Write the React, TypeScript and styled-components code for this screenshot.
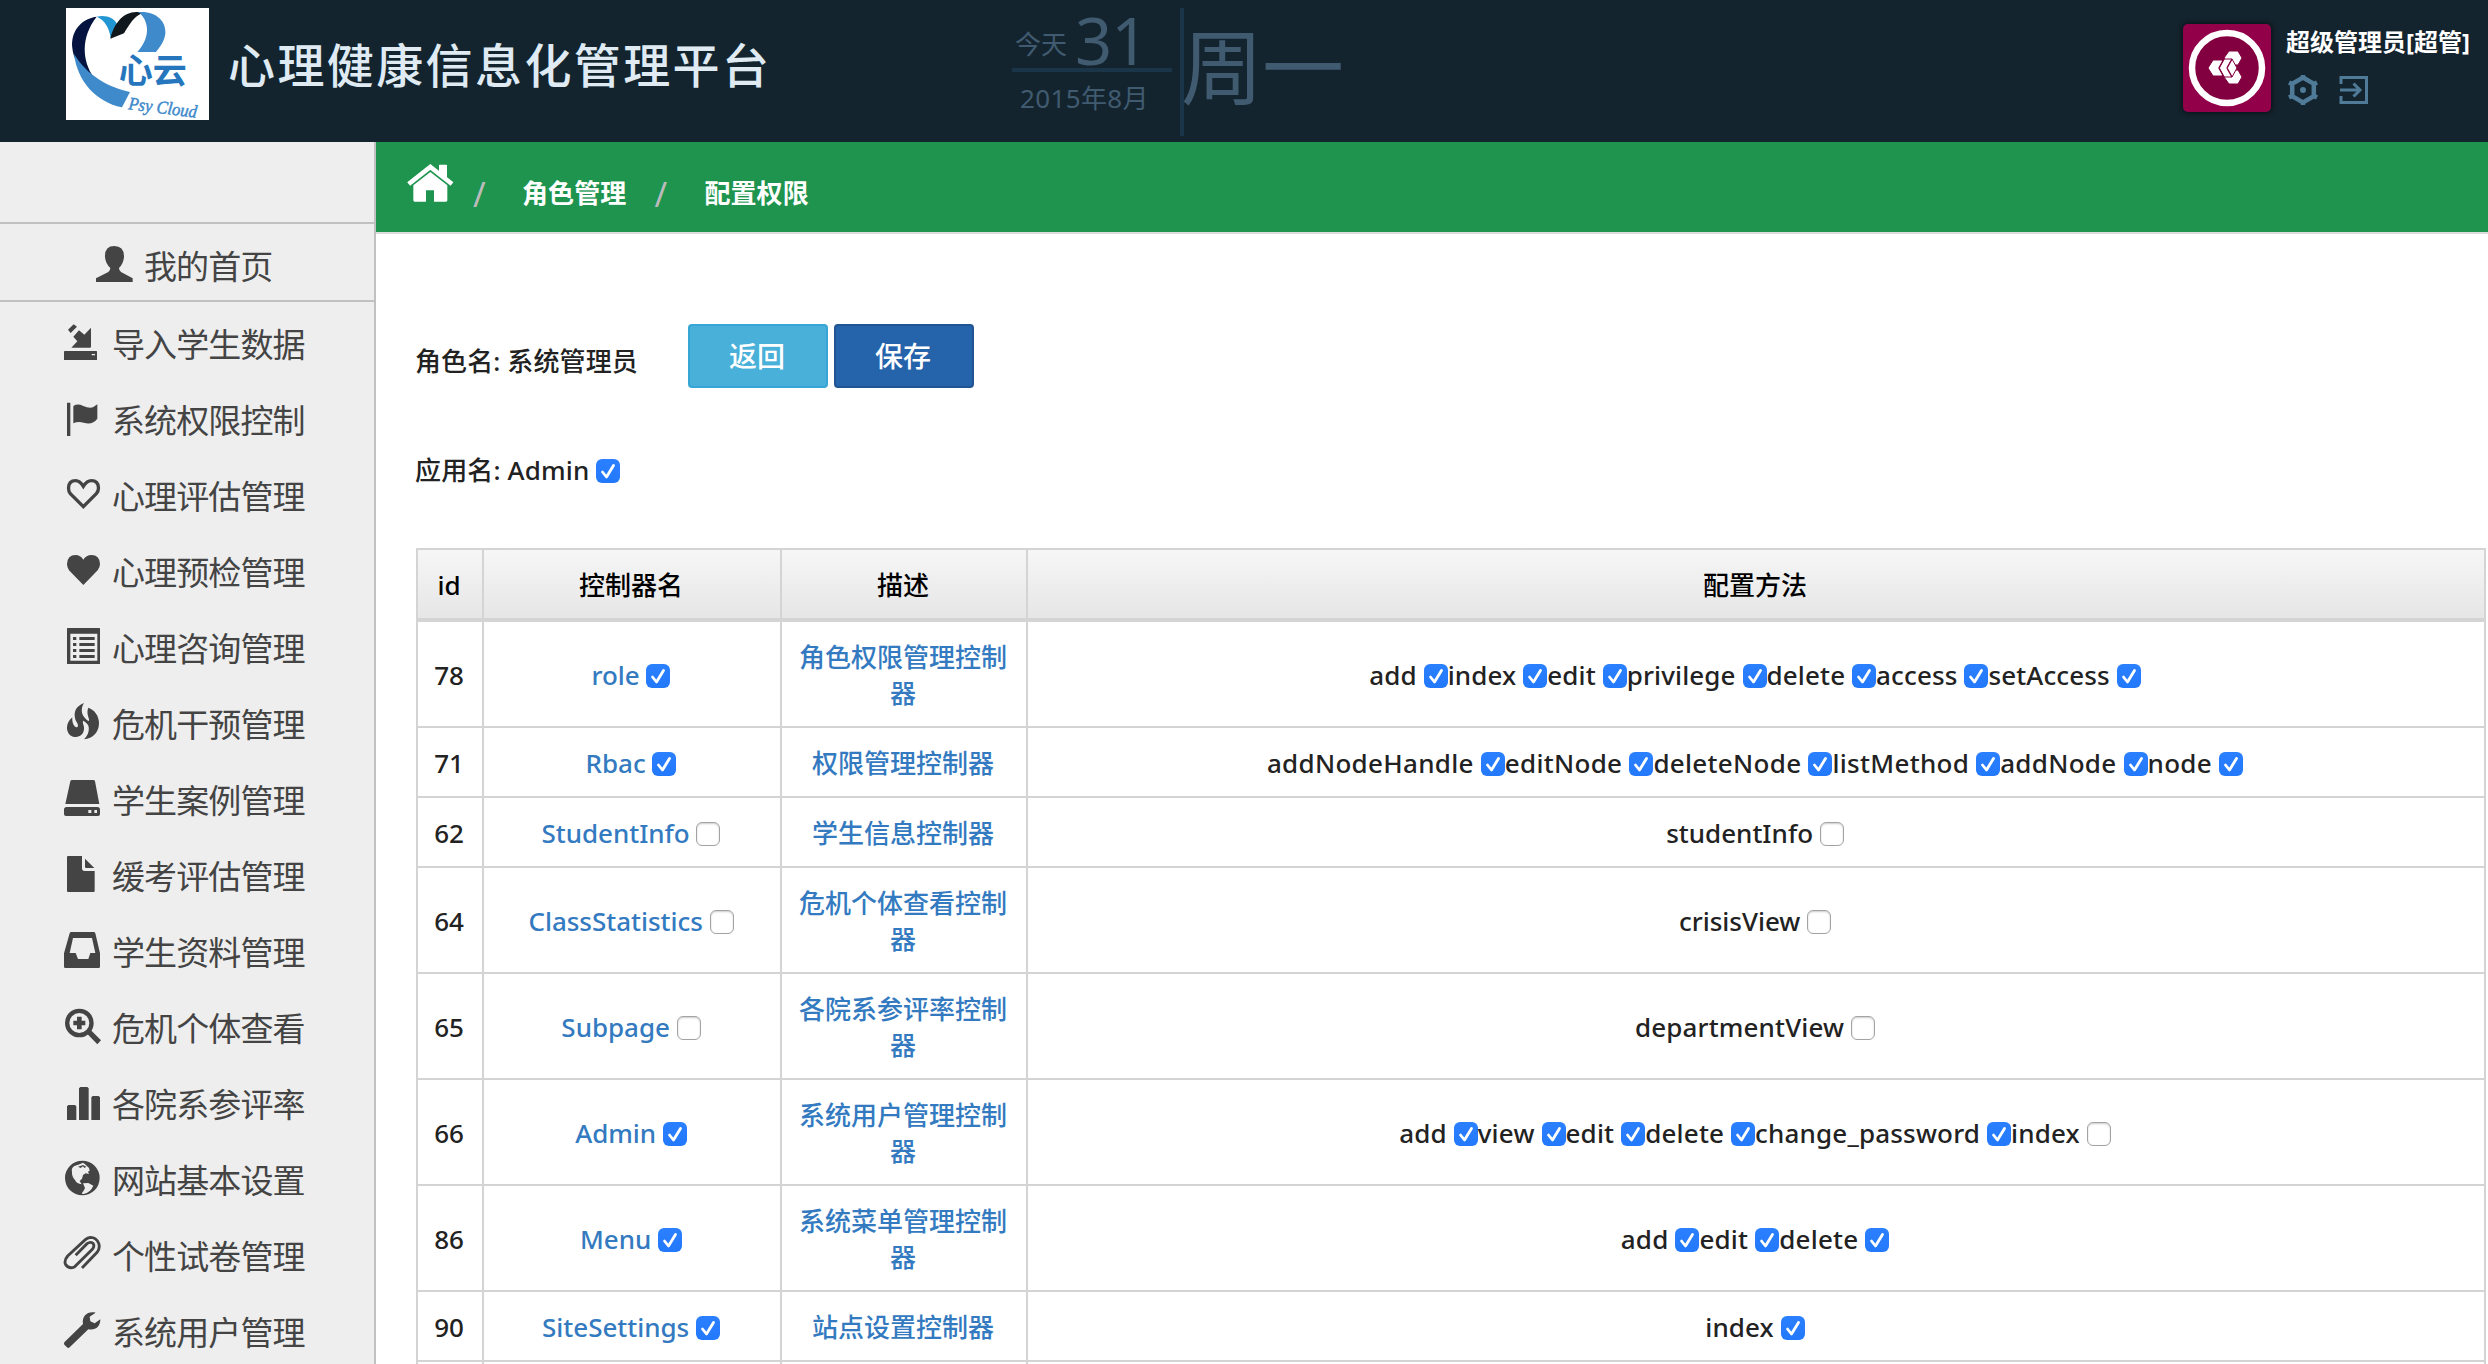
import React from 'react';
import styled, { createGlobalStyle } from 'styled-components';

const Global = createGlobalStyle`
  * { box-sizing: border-box; }
  body { margin: 0; background: #fff; overflow: hidden; font-family: 'Noto Sans', 'Noto Sans CJK SC', sans-serif; }
`;

const Page = styled.div`
  width: 2488px; height: 1364px; overflow: hidden;
  display: grid; grid-template-rows: 142px 1fr;
`;
const Header = styled.header`
  display: flex; align-items: flex-start; background: #14242e; padding-left: 66px;
`;
const Logo = styled.svg`
  width: 143px; height: 112px; margin-top: 8px; flex: none; background: #fff;
`;
const Title = styled.h1`
  margin: 30px 0 0 19px; width: 784px; flex: none; white-space: nowrap;
  font: 500 47px/66px 'Noto Sans CJK SC', sans-serif; letter-spacing: 2.4px; color: #dfeaf3;
`;
const DateBox = styled.div`
  width: 172px; height: 128px; margin-top: 8px; flex: none; color: #405b70; border-right: 4px solid #1b3548;
  display: flex; flex-direction: column;
`;
const Today = styled.div`
  width: 160px; height: 64px; border-bottom: 4px solid #1b3548; padding-left: 3px;
  display: flex; align-items: flex-start; font-size: 26px; line-height: 72px; white-space: nowrap;
`;
const Day = styled.span`
  font-size: 65px; line-height: 64px; letter-spacing: -1px; margin-left: 8px;
`;
const Month = styled.div`
  padding-left: 8px; font-size: 26px; line-height: 52px; letter-spacing: 0.35px;
`;
const Weekday = styled.div`
  font-size: 82px; line-height: 133px; color: #405b70; margin-left: -3px; width: 1002px; flex: none; letter-spacing: -1px;
`;
const Avatar = styled.svg`
  width: 88px; height: 88px; margin-top: 24px; flex: none; border-radius: 5px; box-shadow: 0 0 4px 2px #0a161d;
`;
const UserBox = styled.div`
  margin: 24px 0 0 15px; display: flex; flex-direction: column; gap: 13px;
`;
const UserName = styled.div`
  font-size: 24px; line-height: 36px; font-weight: 700; color: #fff; white-space: nowrap;
`;
const UserTools = styled.div`
  display: flex; gap: 18px; height: 34px;
  svg { width: 34px; height: 34px; fill: none; stroke: #4f7b98; stroke-width: 3; }
`;
const Body = styled.div`
  display: grid; grid-template-columns: 376px 1fr; min-height: 0;
`;
const Sidebar = styled.nav`
  background: #eee; border-right: 2px solid #c1c1c1; padding-top: 80px; color: #444; overflow: hidden;
`;
const NavItem = styled.a<{ $home?: boolean }>`
  display: flex; height: ${p => (p.$home ? 80 : 76)}px; padding-left: ${p => (p.$home ? 95 : 63)}px;
  border: solid #c1c1c1; border-width: ${p => (p.$home ? '2px 0' : '0')};
  font-size: 33px; line-height: 86px; letter-spacing: -0.9px; white-space: nowrap;
  svg { width: 40px; height: 40px; margin: 20px 9px 0 0; flex: none; fill: currentColor; }
`;
const Main = styled.main`min-width: 0;`;
const Crumbs = styled.div`
  height: 92px; background: #1e944e; border-bottom: 2px solid #ddd; padding-left: 30px; letter-spacing: 0.1px;
  display: flex; align-items: flex-start; font-size: 26px; line-height: 102px; font-weight: 700; color: #fff;
`;
const Home = styled.svg`width: 48px; height: 40px; margin-top: 21px; fill: #fff;`;
const Slash = styled.span<{ $left: number; $right: number }>`
  width: 12px; margin: 0 ${p => p.$right}px 0 ${p => p.$left}px; color: #bbb; font-weight: 400;
  font-size: 34px; line-height: 104px; font-family: 'Noto Sans', sans-serif;
`;
const Content = styled.div`padding: 90px 2px 0 40px; color: #222;`;
const RoleLine = styled.div`
  display: flex; height: 64px; font-size: 26px; line-height: 74px; font-weight: 500;
`;
const RoleName = styled.div`width: 273px; margin-left: -1px; letter-spacing: 0.1px;`;
const Button = styled.button<{ $primary?: boolean }>`
  width: 140px; height: 64px; margin-right: 6px; padding: 0 2px 2px 0; border-radius: 4px; color: #fff;
  background: ${p => (p.$primary ? '#2563ab' : '#48b0d9')};
  border: 2px solid ${p => (p.$primary ? '#1f5595' : '#36a6d4')};
  font: 500 28px 'Noto Sans CJK SC', sans-serif;
`;
const AppLine = styled.div`
  margin: 64px 0 0 -1px; height: 36px; display: flex; align-items: center; font-size: 26px; line-height: 36px; font-weight: 500;
`;
const Table = styled.div`
  margin-top: 60px; border: solid #d4d4d4; border-width: 2px 0 0 2px;
  font-size: 26px; line-height: 36px; font-weight: 500;
`;
const Row = styled.div<{ $h: number; $head?: boolean }>`
  display: grid; grid-template-columns: 66px 298px 246px 1fr; height: ${p => p.$h}px;
  border-bottom: ${p => (p.$head ? 4 : 2)}px solid #d4d4d4;
  color: ${p => (p.$head ? '#000' : '#222')};
  background: ${p => (p.$head ? 'linear-gradient(#f6f6f6, #e6e6e6)' : '#fff')};
`;
const Cell = styled.div<{ $link?: boolean }>`
  display: flex; align-items: center; justify-content: center; text-align: center;
  border-right: 2px solid #d4d4d4; padding: 2px 17px 0 15px; min-width: 0;
  color: ${p => (p.$link ? '#337ac0' : 'inherit')};
`;
const Label = styled.span<{ $track?: number }>`
  white-space: pre; letter-spacing: ${p => p.$track ?? -0.03}px;
`;
const Check = styled.svg<{ $on: boolean }>`
  width: 24px; height: 24px; flex: none; margin-top: 2px; border-radius: 6px;
  background: ${p => (p.$on ? 'linear-gradient(#2a80ff, #2379fb)' : '#fff')};
  border: ${p => (p.$on ? 0 : 1.5)}px solid #a3a3a3;
  box-shadow: ${p => (p.$on ? 'none' : 'inset 0 1px 2px #ccc')};
  path { fill: none; stroke: #fff; stroke-width: 2.8; stroke-linecap: round; stroke-linejoin: round; }
`;

const Box = ({ on }: { on: boolean }) => (
  <Check $on={on} viewBox="0 0 24 24">{on && <path d="M6.500 13 10.500 18 17.500 6.500" />}</Check>
);

const icons: Record<string, React.ReactNode> = {
  user: <path d="M3 114V103L40 84Q46 80 46 72Q32 60 30 40Q28 6 58 6Q88 6 87 40Q85 60 72 72Q72 80 78 84L113 103V114Z" />,
  import: <path fillRule="evenodd" d="M84 17V74Q84 77 81 77H25L43 58L31 44L48 25L64 38ZM15 23L32 7L42 14L23 33ZM5 87H100Q102 87 102 89V114H3V89Q3 87 5 87ZM86 96V100H96V96Z" />,
  flag: <path d="M12 14H22V114H12ZM31 24Q44 16 59 23Q78 32 90 28L103 19V62Q88 82 62 74Q45 69 31 76Z" />,
  heartEmpty: <path d="M61 98 L22 59 Q16.500 52 16.500 42 Q17 20 38 20 Q50 20 61 37 Q72 20 85 20 Q106 20 106.500 42 Q106.500 52 100 59Z" fill="none" stroke="currentColor" strokeWidth="10" />,
  heart: <path d="M61 105 L18 61 Q12 52 12 42 Q13 15 38 15 Q52 15 61 29 Q70 15 85 15 Q110 15 111 42 Q111 52 104 61Z" />,
  list: <path fillRule="evenodd" d="M14 6H109Q111 6 111 8V114H12V8Q12 6 14 6ZM22 23V104H103V23ZM30 33H40V42H30ZM49 33H95V42H49ZM30 51H40V60H30ZM49 51H95V60H49ZM30 69H40V78H30ZM49 69H95V78H49ZM30 87H40V96H30ZM49 87H95V96H49Z" />,
  fire: <path d="M63 3C40 12 32 28 36 48C38 60 48 66 44 74C38 80 26 68 28 46C14 58 12 70 12 80C14 98 26 105 40 105C56 104 64 92 63 76C62 68 58 62 60 56C72 62 80 70 77 86C75 98 70 104 63 112C90 110 108 90 108 64C108 40 94 24 76 17C70 30 76 44 78 52C80 62 70 54 64 46C54 34 54 16 63 3Z" />,
  drive: <path fillRule="evenodd" d="M27 6H91Q95 6 96 10L109 78H7L22 10Q23 6 27 6ZM11 87H103Q111 87 111 95V108Q111 114 105 114H9Q3 114 3 108V95Q3 87 11 87ZM76 96V105H85V96ZM94 96V105H102V96Z" />,
  file: <path d="M15 6H57V43Q57 51 65 51H95V111Q95 114 92 114H15Q12 114 12 111V9Q12 6 15 6ZM66 14L94 42H69Q66 42 66 39Z" />,
  inbox: <path fillRule="evenodd" d="M25 6H92Q96 6 97 10L111 70V110Q111 114 107 114H7Q3 114 3 110V70L20 10Q21 6 25 6ZM30 24L20 69H38L45 87H76L82 69H97L87 24Z" />,
  zoom: <g><circle cx="49" cy="51" r="36.500" fill="none" stroke="currentColor" strokeWidth="13" /><path d="M42 32H56V44H67V58H56V70H42V58H31V44H42ZM84 73L114 103L103 115L73 84Z" /></g>,
  bars: <path d="M16 69H36L40 73V114H12V73ZM52 15H73L77 19V114H48V19ZM89 42H107L111 46V114H85V46Z" />,
  globe: <path fillRule="evenodd" d="M58 8A52 52 0 1 0 58 112A52 52 0 1 0 58 8ZM27 42Q24 30 34 24L50 19L60 14L66 19L78 30L80 38L75 41L78 48L68 46L60 51L57 62L50 69L56 79Q41 77 36 66Q26 56 27 42ZM45 26L53 30L60 25L64 30L70 26L60 21ZM60 76L76 75L91 83Q82 104 62 108Q52 108 62 98L66 90Z" />,
  clip: <path d="M57 102L103 54Q112 42 107 28Q100 10 82 10Q74 11 67 17L14 66Q2 80 8 92Q18 106 34 99L88 46Q96 36 90 28Q82 22 72 29L38 64" fill="none" stroke="currentColor" strokeWidth="8.500" />,
  wrench: <path d="M4 97L60 42C56 18 74 2 98 8L80 20L82 34L95 40L112 28C112 50 98 62 76 58L20 112Q16 116 12 112L4 104Q2 100 4 97Z" />,
};

const nav: [string, string][] = [
  ['user', '我的首页'], ['import', '导入学生数据'], ['flag', '系统权限控制'], ['heartEmpty', '心理评估管理'],
  ['heart', '心理预检管理'], ['list', '心理咨询管理'], ['fire', '危机干预管理'], ['drive', '学生案例管理'],
  ['file', '缓考评估管理'], ['inbox', '学生资料管理'], ['zoom', '危机个体查看'], ['bars', '各院系参评率'],
  ['globe', '网站基本设置'], ['clip', '个性试卷管理'], ['wrench', '系统用户管理'],
];

type Method = [string, boolean];
const rows: { id: number; name: string; on: boolean; desc: string; h: number; track: number; methods: Method[] }[] = [
  { id: 78, name: 'role', on: true, desc: '角色权限管理控制器', h: 106, track: 0.13, methods: [['add', true], ['index', true], ['edit', true], ['privilege', true], ['delete', true], ['access', true], ['setAccess', true]] },
  { id: 71, name: 'Rbac', on: true, desc: '权限管理控制器', h: 70, track: 0.3, methods: [['addNodeHandle', true], ['editNode', true], ['deleteNode', true], ['listMethod', true], ['addNode', true], ['node', true]] },
  { id: 62, name: 'StudentInfo', on: false, desc: '学生信息控制器', h: 70, track: 0, methods: [['studentInfo', false]] },
  { id: 64, name: 'ClassStatistics', on: false, desc: '危机个体查看控制器', h: 106, track: 0, methods: [['crisisView', false]] },
  { id: 65, name: 'Subpage', on: false, desc: '各院系参评率控制器', h: 106, track: 0.13, methods: [['departmentView', false]] },
  { id: 66, name: 'Admin', on: true, desc: '系统用户管理控制器', h: 106, track: 0.18, methods: [['add', true], ['view', true], ['edit', true], ['delete', true], ['change_password', true], ['index', false]] },
  { id: 86, name: 'Menu', on: true, desc: '系统菜单管理控制器', h: 106, track: 0.2, methods: [['add', true], ['edit', true], ['delete', true]] },
  { id: 90, name: 'SiteSettings', on: true, desc: '站点设置控制器', h: 70, track: 0.1, methods: [['index', true]] },
];

export default function App() {
  return (
    <Page>
      <Global />
      <Header>
        <Logo viewBox="0 0 429 336">
          <path d="M92 26C40 34 14 74 19 120C22 150 36 180 82 206C50 160 42 90 92 26Z" fill="#04133f" />
          <path d="M24 138C34 220 90 282 168 298L192 252C130 238 66 206 24 138Z" fill="#3f8acb" />
          <path d="M92 26C120 20 146 30 154 50L134 90C130 60 116 36 92 26Z" fill="#2296d3" />
          <path d="M133 92C144 44 174 10 214 12L230 15C204 24 190 50 174 76Z" fill="#10181d" />
          <path d="M218 12C270 8 302 40 298 78C294 104 280 118 270 132H214C248 96 256 46 218 12Z" fill="#3f8acb" />
          <text x="158" y="224" fontSize="102" fontWeight="700" textLength="204" fill="#2576bd" fontFamily="Noto Sans CJK SC">心云</text>
          <text x="186" y="304" fontSize="54" fontStyle="italic" fontWeight="400" textLength="206" lengthAdjust="spacingAndGlyphs" fill="#3f8acb" stroke="#3f8acb" strokeWidth="1.500" fontFamily="Liberation Serif" transform="rotate(7 186 304)">Psy Cloud</text>
        </Logo>
        <Title>心理健康信息化管理平台</Title>
        <DateBox>
          <Today>今天<Day>31</Day></Today>
          <Month>2015年8月</Month>
        </DateBox>
        <Weekday>周一</Weekday>
        <Avatar viewBox="0 0 88 88">
          <rect width="88" height="88" fill="#92004a" />
          <circle cx="44" cy="44" r="35" fill="#82003f" stroke="#fff" strokeWidth="6.500" />
          <g fill="#fff" stroke="#82003f" strokeWidth="1">
            <path d="M30 36h9l5 8-5 8h-9l-5-8z" />
            <path d="M46 27h9l4 7-4 7h-9l-5-7z" />
            <path d="M46 46h9l4 7-4 7h-9l-5-7z" />
            <path d="M41 35h8l5 9-5 9h-8l-5-9z" />
            <path d="M36 44L41 35M36 44L41 53M44 44l5-9M44 44l5 9" fill="none" strokeWidth="1.500" />
          </g>
        </Avatar>
        <UserBox>
          <UserName>超级管理员[超管]</UserName>
          <UserTools>
            <svg viewBox="0 0 34 34">
              <path d="M17 4.500L27.800 10.700V23.300L17 29.500L6.200 23.300V10.700Z" strokeWidth="4.500" />
              <path d="M17 2V5M17 29V32M3 9.500L6 11M28 11L31 9.500M3 24.500L6 23M28 23L31 24.500" strokeWidth="4.500" />
              <circle cx="17" cy="17" r="3" fill="#4f7b98" stroke="none" />
            </svg>
            <svg viewBox="0 0 34 34">
              <path d="M3 11V4.500H28.500V29.500H3V23M2 17H21M15.500 10.500L22 17L15.500 23.500" />
            </svg>
          </UserTools>
        </UserBox>
      </Header>
      <Body>
        <Sidebar>
          {nav.map(([icon, label]) => (
            <NavItem key={label} $home={icon === 'user'}>
              <svg viewBox="0 0 120 120">{icons[icon]}</svg>{label}
            </NavItem>
          ))}
        </Sidebar>
        <Main>
          <Crumbs>
            <Home viewBox="0 0 144 120">
              <path d="M8 63L73 12L138 63" fill="none" stroke="#fff" strokeWidth="14" />
              <path d="M99 7Q99 5 101 5H121Q123 5 123 7V50L99 32ZM73 27L124 67V112Q124 116 120 116H84V82H60V116H26Q22 116 22 112V67Z" />
            </Home>
            <Slash $left={19} $right={37}>/</Slash>角色管理
            <Slash $left={28} $right={38}>/</Slash>配置权限
          </Crumbs>
          <Content>
            <RoleLine>
              <RoleName>角色名: 系统管理员</RoleName>
              <Button>返回</Button>
              <Button $primary>保存</Button>
            </RoleLine>
            <AppLine><Label $track={0.15}>{'应用名: Admin '}</Label><Box on /></AppLine>
            <Table>
              <Row $h={72} $head>
                <Cell>id</Cell><Cell>控制器名</Cell><Cell>描述</Cell><Cell>配置方法</Cell>
              </Row>
              {rows.map(r => (
                <Row key={r.id} $h={r.h}>
                  <Cell>{r.id}</Cell>
                  <Cell $link><Label>{r.name + ' '}</Label><Box on={r.on} /></Cell>
                  <Cell $link>{r.desc}</Cell>
                  <Cell>
                    {r.methods.map(([name, on]) => (
                      <React.Fragment key={name}><Label $track={r.track}>{name + ' '}</Label><Box on={on} /></React.Fragment>
                    ))}
                  </Cell>
                </Row>
              ))}
              <Row $h={70}><Cell /><Cell /><Cell /><Cell /></Row>
            </Table>
          </Content>
        </Main>
      </Body>
    </Page>
  );
}
